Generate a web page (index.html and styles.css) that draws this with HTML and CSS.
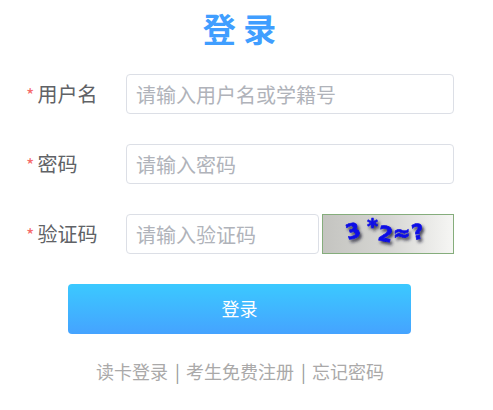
FILE: index.html
```html
<!DOCTYPE html>
<html lang="zh-CN">
<head>
<meta charset="utf-8">
<title>登录</title>
<link rel="stylesheet" href="styles.css">
</head>
<body>
<main class="login">
  <h1 class="title">登 录</h1>
  <form class="form">
    <div class="row">
      <label class="label"><span class="star">*</span>用户名</label>
      <div class="field"><input class="input" placeholder="请输入用户名或学籍号"></div>
    </div>
    <div class="row">
      <label class="label"><span class="star">*</span>密码</label>
      <div class="field"><input class="input" placeholder="请输入密码"></div>
    </div>
    <div class="row">
      <label class="label"><span class="star">*</span>验证码</label>
      <div class="field captcha-field">
        <input class="input captcha-input" placeholder="请输入验证码">
        <svg class="captcha" width="132" height="40" viewBox="0 0 132 40">
          <defs>
            <linearGradient id="bg" x1="0" y1="0" x2="1" y2="0">
              <stop offset="0" stop-color="#c4c4c0"/>
              <stop offset="0.5" stop-color="#d6d6d3"/>
              <stop offset="1" stop-color="#f6f6f4"/>
            </linearGradient>
            <filter id="ink" x="-20%" y="-40%" width="140%" height="190%">
              <feGaussianBlur in="SourceGraphic" stdDeviation="0.3" result="crisp"/>
              <feDropShadow in="crisp" dx="2" dy="2.5" stdDeviation="1.5" flood-color="#1a1a33" flood-opacity="0.85"/>
            </filter>
          </defs>
          <rect x="0.5" y="0.5" width="131" height="39" fill="url(#bg)" stroke="#85ad7c"/>
          <text class="captcha-text" x="26 45 55 71 91" y="26 20 26 26 26" rotate="-16 0 10 0 -10">3*2≈?</text>
        </svg>
      </div>
    </div>
    <button class="submit" type="button">登录</button>
  </form>
  <p class="links"><a>读卡登录</a><span class="sep">|</span><a>考生免费注册</a><span class="sep">|</span><a>忘记密码</a></p>
</main>
</body>
</html>
```
FILE: styles.css
```css
* { box-sizing: border-box; }
html, body { margin: 0; background: #fff; }
body { font-family: "Noto Sans CJK SC", "Microsoft YaHei", sans-serif; }
.login { width: 493px; padding: 4px 39px 0 26px; }
.title { margin: 0 -25px 22px -26px; text-align: center; font-size: 33px; line-height: 48px; font-weight: 700; color: #409eff; }
.form { display: flex; flex-direction: column; }
.row { display: flex; align-items: center; height: 40px; margin-bottom: 30px; }
.label { width: 100px; flex: none; font-size: 20px; color: #606266; line-height: 40px; white-space: nowrap; }
.star { color: #f56c6c; margin-right: 3px; font-size: 18px; }
.field { flex: 1; display: flex; min-width: 0; }
.input { width: 100%; height: 40px; padding: 0 9px; border: 1px solid #dcdfe6; border-radius: 4px; font: inherit; font-size: 20px; color: #606266; background: #fff; outline: none; }
.input::placeholder { color: #b0b3ba; opacity: 1; }
.captcha-field { gap: 3px; }
.captcha-input { flex: 1; width: auto; min-width: 0; }
.captcha { flex: none; display: block; }
.captcha-text { font-family: "DejaVu Sans", sans-serif; font-size: 21px; font-weight: 700; fill: #0a0ae6; stroke: #0a0ae6; stroke-width: 0.6; stroke-linejoin: round; filter: url(#ink); }
.submit { display: block; width: 343px; height: 50px; margin: 0 0 0 42px; border: 0; padding: 0 0 2px; border-radius: 4px; background: linear-gradient(180deg, #3bc9ff, #45a3ff); color: #fff; font: inherit; font-size: 18px; }
.links { display: flex; margin: 24px 0 0 70px; font-size: 18px; line-height: 27px; color: #aaa9a9; white-space: nowrap; }
.sep { width: 18px; padding-left: 1px; text-align: center; color: #999; }
```
